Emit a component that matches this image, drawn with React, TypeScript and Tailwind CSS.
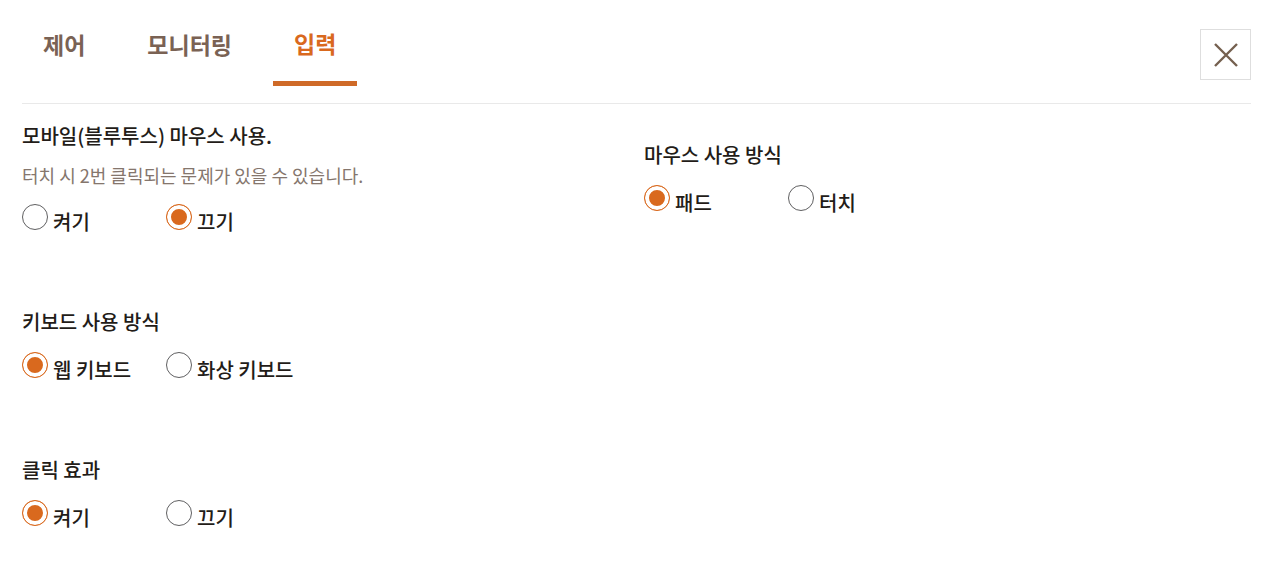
import React, { useState } from 'react';

interface RadioGroupProps {
  name: string;
  title: string;
  description?: string;
  options: string[];
  initial: string;
}

const TABS = ['제어', '모니터링', '입력'];

const RadioGroup: React.FC<RadioGroupProps> = ({ name, title, description, options, initial }) => {
  const [value, setValue] = useState(initial);

  return (
    <fieldset className="min-w-0">
      <legend className="text-[20px] leading-7 font-medium">{title}</legend>
      {description && (
        <p className="mt-3 text-[18px] leading-[26px] font-normal text-[#85766d]">{description}</p>
      )}
      <div className="mt-3 flex">
        {options.map((option) => (
          <label key={option} className="flex w-36 items-start gap-[5px] whitespace-nowrap">
            <input
              type="radio"
              name={name}
              value={option}
              checked={value === option}
              onChange={() => setValue(option)}
              className="mt-1 size-[26px] shrink-0 appearance-none rounded-full border border-[#5f5f61] bg-white checked:border-[#d9691e] checked:bg-[#d9691e] checked:shadow-[inset_0_0_0_4px_#fff]"
            />
            <span className="mt-2 text-[20px] leading-7 font-medium">{option}</span>
          </label>
        ))}
      </div>
    </fieldset>
  );
};

export default function App() {
  const [tab, setTab] = useState('입력');

  return (
    <main className="pt-[29px] pr-[29px] pb-8 pl-[22px] font-['Noto_Sans_CJK_KR',sans-serif] text-[#231c18]">
      <header className="flex items-start justify-between border-b border-[#e9e9e9] pb-[17px]">
        <nav className="flex gap-5">
          {TABS.map((item) => (
            <button
              key={item}
              type="button"
              onClick={() => setTab(item)}
              className={
                item === tab
                  ? 'h-[57px] border-b-[5px] border-[#cf6a28] px-[21px] pb-6 text-[23px] leading-7 font-bold text-[#d9691e]'
                  : 'h-[57px] border-b-[5px] border-transparent px-[21px] pb-[22px] text-[23px] leading-7 font-bold text-[#7a6254]'
              }
            >
              {item}
            </button>
          ))}
        </nav>
        <button
          type="button"
          aria-label="닫기"
          className="flex size-[51px] items-center justify-center border border-[#dedede] bg-white"
        >
          <svg viewBox="0 0 24 24" className="size-6" fill="none" stroke="#75604f" strokeWidth="2.4">
            <path d="M1 1L23 23M23 1L1 23" />
          </svg>
        </button>
      </header>

      <div className="mt-[18px] grid grid-cols-[622fr_607fr] items-center gap-y-[72px]">
        <RadioGroup
          name="mobile-mouse"
          title="모바일(블루투스) 마우스 사용."
          description="터치 시 2번 클릭되는 문제가 있을 수 있습니다."
          options={['켜기', '끄기']}
          initial="끄기"
        />
        <RadioGroup name="mouse-mode" title="마우스 사용 방식" options={['패드', '터치']} initial="패드" />
        <div className="col-span-2">
          <RadioGroup
            name="keyboard-mode"
            title="키보드 사용 방식"
            options={['웹 키보드', '화상 키보드']}
            initial="웹 키보드"
          />
        </div>
        <div className="col-span-2">
          <RadioGroup name="click-effect" title="클릭 효과" options={['켜기', '끄기']} initial="켜기" />
        </div>
      </div>
    </main>
  );
}
